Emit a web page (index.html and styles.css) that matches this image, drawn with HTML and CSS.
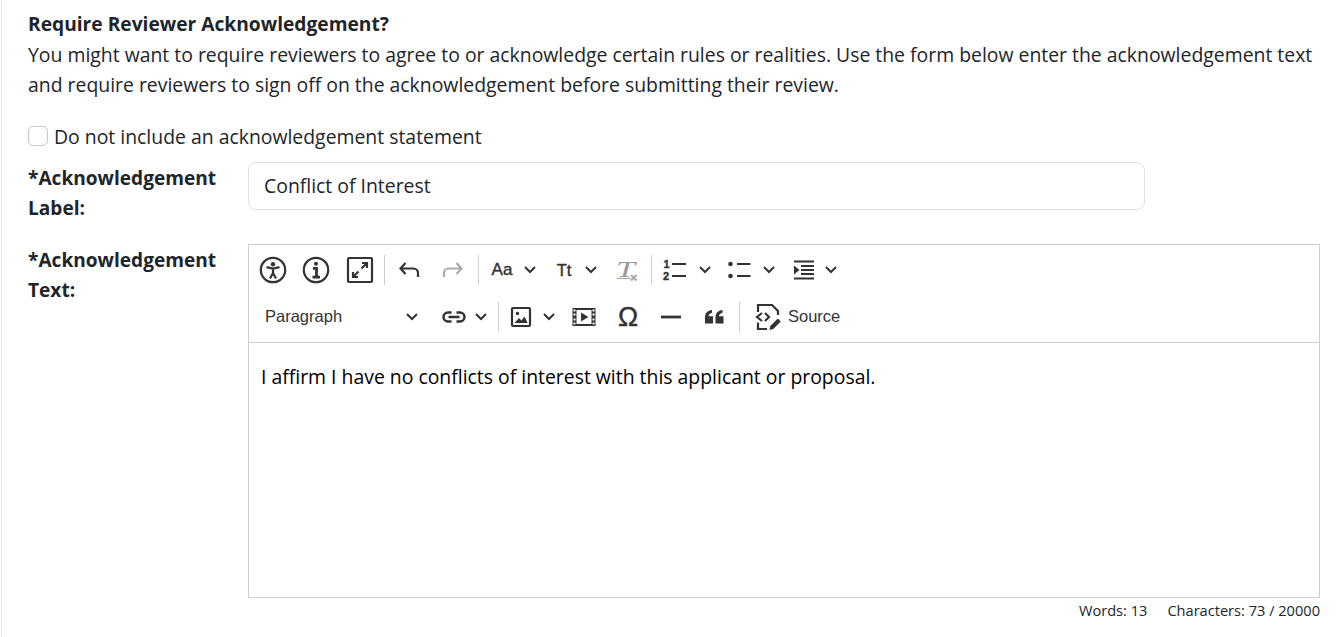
FILE: index.html
```html
<!DOCTYPE html>
<html lang="en">
<head>
<meta charset="utf-8">
<title>Require Reviewer Acknowledgement</title>
<link rel="stylesheet" href="styles.css">
</head>
<body>
<main class="page">
  <h2 class="title">Require Reviewer Acknowledgement?</h2>
  <p class="intro">You might want to require reviewers to agree to or acknowledge certain rules or realities. Use the form below enter the acknowledgement text and require reviewers to sign off on the acknowledgement before submitting their review.</p>
  <label class="check"><input type="checkbox"><span>Do not include an acknowledgement statement</span></label>
  <div class="row row-label">
    <label class="field-label">*Acknowledgement Label:</label>
    <input class="text-input" type="text" value="Conflict of Interest">
  </div>
  <div class="row">
    <label class="field-label">*Acknowledgement Text:</label>
    <div class="editor-wrap">
      <div class="editor">
        <div class="toolbar">
          <div class="tb-row first">
            <svg class="ic" viewBox="0 0 28 28"><circle class="s" cx="14" cy="14" r="12.2"/><circle class="f" cx="14" cy="8.2" r="2.2"/><path class="s" d="M7.500 11.200 14 12.600l6.500-1.400M14 12.600v4.400M14 17l-3 5.500M14 17l3 5.500"/></svg>
            <svg class="ic ml15" viewBox="0 0 28 28"><circle class="s" cx="14" cy="14" r="12.2"/><circle class="f" cx="14" cy="7.800" r="2"/><path class="s thick" d="M11 12.300h3.500v8.500M10.500 21.200h7.500"/></svg>
            <svg class="ic ml16" viewBox="0 0 28 28"><rect class="s" x="2" y="2" width="24" height="24" rx="1"/><path class="s" d="M15.500 12.500 21 7M16 7h5v5M12.500 15.500 7 21M7 16v5h5"/></svg>
            <i class="sep ml10"></i>
            <svg class="ic ml10" viewBox="0 0 28 28"><path class="s" d="M10.500 7 5.500 12.500 10.500 18M5.500 12.500H18c3 0 5 2 5 4.500v4"/></svg>
            <svg class="ic ml16 off" viewBox="0 0 28 28"><path class="s" d="M17.500 7l5 5.500-5 5.500M22.500 12.500H10c-3 0-5 2-5 4.500v4"/></svg>
            <i class="sep ml11"></i>
            <span class="ic glyph ml9">Aa</span>
            <svg class="ch ml8" viewBox="0 0 12 12"><path d="M1 3 6 8l5-5"/></svg>
            <span class="ic glyph small ml14">Tt</span>
            <svg class="ch ml7" viewBox="0 0 12 12"><path d="M1 3 6 8l5-5"/></svg>
            <svg class="ic ml16" viewBox="0 0 28 28"><text class="tx" x="3" y="21" textLength="19" lengthAdjust="spacingAndGlyphs">T</text><path class="s off-line" d="M3.500 22.500h14"/><path class="s off-x" d="M18 19l5.500 5.500M23.500 19 18 24.500"/></svg>
            <i class="sep ml10"></i>
            <svg class="ic ml9" viewBox="0 0 28 28"><text class="num" x="2.500" y="12">1</text><text class="num" x="2" y="24">2</text><path class="s" d="M11 8h14M11 20h14"/></svg>
            <svg class="ch ml10" viewBox="0 0 12 12"><path d="M1 3 6 8l5-5"/></svg>
            <svg class="ic ml15" viewBox="0 0 28 28"><circle class="f" cx="4.500" cy="8" r="2.300"/><circle class="f" cx="4.500" cy="20" r="2.300"/><path class="s" d="M11 8h13.500M11 20h13.500"/></svg>
            <svg class="ch ml9" viewBox="0 0 12 12"><path d="M1 3 6 8l5-5"/></svg>
            <svg class="ic ml15" viewBox="0 0 28 28"><path class="s" d="M4 5.500h20M11 10h13M11 14h13M11 18h13M4 22.500h20"/><path class="f" d="M4 9.500v9l5.500-4.500z"/></svg>
            <svg class="ch ml7" viewBox="0 0 12 12"><path d="M1 3 6 8l5-5"/></svg>
          </div>
          <div class="tb-row second">
            <span class="para">Paragraph</span>
            <svg class="ch" viewBox="0 0 12 12"><path d="M1 3 6 8l5-5"/></svg>
            <svg class="ic ml22" viewBox="0 0 28 28"><path class="s link" d="M11.500 9.500H8a4.500 4.500 0 0 0 0 9h3.500M16.500 9.500H20a4.500 4.500 0 0 1 0 9h-3.500M8.500 14h11"/></svg>
            <svg class="ch ml7" viewBox="0 0 12 12"><path d="M1 3 6 8l5-5"/></svg>
            <i class="sep ml11"></i>
            <svg class="ic ml8" viewBox="0 0 28 28"><rect class="s" x="5" y="5" width="18" height="18" rx="1"/><circle class="f" cx="10.500" cy="10.500" r="1.700"/><path class="f" d="M7.500 20l4.500-5 2.500 2.500 3-4 3 6.500z"/></svg>
            <svg class="ch ml8" viewBox="0 0 12 12"><path d="M1 3 6 8l5-5"/></svg>
            <svg class="ic ml15" viewBox="0 0 28 28"><path class="f" fill-rule="evenodd" d="M2.500 5h23v18h-23zM6.500 7v14h15V7zM3.500 6.500v2h2v-2zM3.500 10.500v2h2v-2zM3.500 15.500v2h2v-2zM3.500 19.500v2h2v-2zM22.500 6.500v2h2v-2zM22.500 10.500v2h2v-2zM22.500 15.500v2h2v-2zM22.500 19.500v2h2v-2z"/><path class="f" d="M11 9.500v9l7.500-4.500z"/></svg>
            <span class="ic omega ml16">Ω</span>
            <svg class="ic ml15" viewBox="0 0 28 28"><path class="s thick" d="M4 14h20"/></svg>
            <svg class="ic ml15" viewBox="0 0 28 28"><path class="f" d="M5 20.500v-6C5 10 7.500 7.500 12 7v2.800c-2 .4-3.300 1.500-3.500 3.400H13v7.300zM15.500 20.500v-6c0-4.500 2.500-7 7-7.500v2.800c-2 .4-3.300 1.500-3.500 3.400h4.500v7.300z"/></svg>
            <i class="sep ml11"></i>
            <svg class="ic ml14" viewBox="0 0 28 28"><path class="s" d="M4 9V2h14l6 6v4M8 10l-5 4 5 4M11 10l4 4-4 4M4 19.500V26h9"/><path class="f" d="M15.500 27l.8-4 7.500-7.500 3 3-7.500 7.500z"/></svg>
            <span class="source">Source</span>
          </div>
        </div>
        <div class="content">I affirm I have no conflicts of interest with this applicant or proposal.</div>
      </div>
      <div class="counts"><span>Words: 13</span><span>Characters: 73 / 20000</span></div>
    </div>
  </div>
</main>
</body>
</html>
```
FILE: styles.css
```css
* { box-sizing: border-box; }
html, body { margin: 0; height: 100%; overflow: hidden; background: #fff; }
body {
  font-family: "Open Sans", "Noto Sans", sans-serif;
  font-size: 19.400px;
  color: #212529;
}
.page {
  height: 637px;
  margin-left: 1px;
  border-left: 1px solid #e3e5e8;
  padding: 9px 16px 0 26px;
}
.title { margin: 0; font-size: 19.200px; font-weight: 700; line-height: 30px; }
.intro { margin: 1px 0 0; line-height: 30px; }
.check { display: flex; align-items: center; gap: 6px; margin-top: 21px; height: 30px; }
.check input {
  appearance: none;
  width: 20px; height: 20px; margin: 0;
  border: 1px solid #c4c8cc; border-radius: 5px; background: #fff;
}
.row { display: grid; grid-template-columns: 220px 1fr; }
.row-label { margin-top: 11px; height: 82px; }
.field-label { font-size: 19.100px; font-weight: 700; line-height: 30px; padding-top: 1px; max-width: 200px; }
.text-input {
  width: 897px; height: 48px;
  padding: 0 15px 2px;
  border: 1px solid #dee2e6; border-radius: 8px;
  font: inherit; color: #212529;
}
.editor { border: 1px solid #ccced1; height: 354px; display: flex; flex-direction: column; }
.toolbar { height: 98px; border-bottom: 1px solid #ccced1; }
.tb-row { display: flex; align-items: center; height: 48px; }
.tb-row.first { padding: 2px 0 0 10px; }
.tb-row.second { padding-left: 16px; }
.ic { width: 28px; height: 28px; flex: none; display: flex; align-items: center; justify-content: center; }
.ch { width: 12px; height: 12px; flex: none; }
.ch path { fill: none; stroke: #333; stroke-width: 2; }
.s { fill: none; stroke: #333; stroke-width: 2.200; }
.s.thick { stroke-width: 2.800; }
.s.link { stroke-width: 2.500; }
.s.off-line { stroke: #aaa; stroke-width: 1.200; }
.s.off-x { stroke: #aaa; stroke-width: 2.200; }
.f { fill: #333; }
.off .s { stroke: #aaa; }
.num { font: 700 11px "Liberation Sans", sans-serif; fill: #333; stroke: #333; stroke-width: .4px; }
.tx { font: italic 24px "Liberation Serif", serif; fill: #999; }
.sep { width: 1px; height: 30px; background: #ccced1; flex: none; }
.glyph { font: 17px "Liberation Sans", sans-serif; color: #333; -webkit-text-stroke: .4px #333; }
.glyph.small { font-size: 16.500px; }
.omega { font: 27px "Liberation Sans", sans-serif; color: #333; -webkit-text-stroke: .4px #333; }
.para { width: 141px; flex: none; margin-bottom: 2px; font: 16.500px "Liberation Sans", sans-serif; color: #333; }
.source { margin: 0 0 2px 6px; font: 16.500px "Liberation Sans", sans-serif; color: #333; }
.ml7 { margin-left: 7px; } .ml8 { margin-left: 8px; } .ml9 { margin-left: 9px; }
.ml10 { margin-left: 10px; } .ml11 { margin-left: 11px; } .ml14 { margin-left: 14px; }
.ml15 { margin-left: 15px; } .ml16 { margin-left: 16px; } .ml22 { margin-left: 22px; }
.content { flex: 1; padding: 19px 12px; color: #000; line-height: 30px; }
.counts { display: flex; justify-content: flex-end; gap: 20px; font-size: 14.600px; line-height: 25px; }
```
